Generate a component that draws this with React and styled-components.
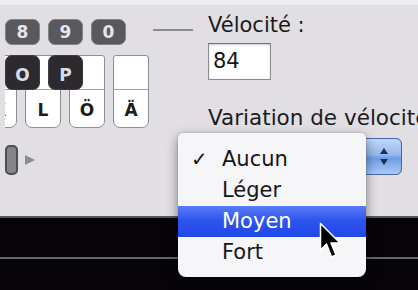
import React from "react";
import styled, { createGlobalStyle } from "styled-components";

const Global = createGlobalStyle`
  html, body { margin: 0; padding: 0; background: #e1dfe3; }
  * { box-sizing: border-box; }
`;

const Page = styled.div`
  width: 418px;
  height: 290px;
  overflow: hidden;
  position: relative;
  display: flex;
  flex-direction: column;
  background: #e1dfe3;
  font-family: "DejaVu Sans", "Noto Sans", sans-serif;
`;

const Upper = styled.div`
  height: 216px;
  flex-shrink: 0;
  display: flex;
  padding-left: 5px;
  background: linear-gradient(#eeedf0 0 5px, #e1dfe3 5px);
`;

const Keyboard = styled.div`
  width: 148px;
  flex-shrink: 0;
  display: flex;
  flex-direction: column;
  padding-top: 19px;
`;

const NumberRow = styled.div`
  display: flex;
  gap: 8px;
`;

const NumKey = styled.div`
  width: 35px;
  height: 26px;
  border-radius: 7px;
  background: #59585c;
  border: 1.5px solid #838286;
  color: #e6e5ea;
  font-weight: bold;
  font-size: 17px;
  display: flex;
  align-items: center;
  justify-content: center;
`;

const Piano = styled.div`
  margin-top: 10px;
  height: 73px;
  width: 148px;
  position: relative;
  overflow: hidden;
`;

const WhiteRow = styled.div`
  display: flex;
  gap: 8px;
  margin-left: -24px;
  height: 100%;
`;

const WhiteKey = styled.div`
  width: 36px;
  height: 73px;
  flex-shrink: 0;
  background: #ffffff;
  border: 1.5px solid #8e8d92;
  border-radius: 3px 3px 7px 7px;
  display: flex;
  flex-direction: column;
`;

const KeyTop = styled.div`
  height: 34px;
  border-bottom: 1px solid #a4a3a8;
`;

const KeyBottom = styled.div`
  flex: 1;
  display: flex;
  align-items: center;
  justify-content: center;
  padding-top: 2px;
  color: #1c1c1e;
  font-weight: bold;
  font-size: 17px;
`;

const DarkRow = styled.div`
  position: absolute;
  top: 0;
  left: 0;
  display: flex;
  gap: 8px;
`;

const DarkKey = styled.div`
  width: 35px;
  height: 35px;
  border-radius: 7px;
  background: #2c2a2e;
  border: 1px solid #3e3c41;
  color: #d6dde6;
  font-weight: bold;
  font-size: 17px;
  display: flex;
  align-items: center;
  justify-content: center;
  padding-top: 4px;
`;

const SmallRow = styled.div`
  margin-top: 17px;
  display: flex;
  align-items: center;
  gap: 7px;
`;

const SmallKey = styled.div`
  width: 13px;
  height: 30px;
  border-radius: 5px;
  background: #868589;
  border: 2px solid #4f4e52;
`;

const Arrow = styled.div`
  width: 0;
  height: 0;
  border-left: 10px solid #8b8a8e;
  border-top: 5px solid transparent;
  border-bottom: 5px solid transparent;
`;

const Connector = styled.div`
  width: 40px;
  height: 2px;
  flex-shrink: 0;
  margin-top: 29px;
  background: #8c8b8f;
`;

const Form = styled.div`
  margin-left: 15px;
  padding-top: 13px;
  display: flex;
  flex-direction: column;
  align-items: flex-start;
`;

const Label = styled.div`
  font-size: ${(p) => p.$size || 21}px;
  line-height: 24px;
  color: #1b1b1d;
  white-space: nowrap;
  margin-top: ${(p) => p.$mt || 0}px;
`;

const Field = styled.div`
  margin-top: 6px;
  width: 63px;
  height: 37px;
  background: #ffffff;
  border: 1px solid #8c8b8f;
  border-top-color: #707074;
  box-shadow: inset 0 1px 2px rgba(0, 0, 0, 0.2);
  font-size: 21px;
  line-height: 35px;
  padding-left: 4px;
  color: #151515;
`;

const Popup = styled.div`
  margin-top: 8px;
  width: 194px;
  height: 37px;
  display: flex;
  justify-content: flex-end;
  background: #ffffff;
  border: 1px solid #8d8c90;
  border-radius: 6px;
`;

const Stepper = styled.div`
  width: 37px;
  margin: -1px -1px -1px 0;
  border: 1px solid #4a69a3;
  border-radius: 0 6px 6px 0;
  background: linear-gradient(#c2d8f8, #94b8ef 45%, #6e9de6 55%, #a8c9f6);
  display: flex;
  flex-direction: column;
  align-items: center;
  justify-content: center;
  gap: 5px;
`;

const Tri = styled.div`
  width: 0;
  height: 0;
  border-left: 4.5px solid transparent;
  border-right: 4.5px solid transparent;
  ${(p) =>
    p.$up
      ? "border-bottom: 6px solid #1e2d55;"
      : "border-top: 6px solid #1e2d55;"}
`;

const Band = styled.div`
  flex: 1;
  background: #060408;
  border-top: 2px solid #58575b;
`;

const BandRule = styled.div`
  margin-top: 39px;
  height: 2px;
  background: #67666b;
`;

const Menu = styled.div`
  position: absolute;
  left: 178px;
  top: 133px;
  width: 188px;
  padding: 11px 0 9px;
  background: #f6f5f8;
  border-radius: 5px 5px 8px 8px;
  box-shadow: 0 4px 12px rgba(0, 0, 0, 0.45), 0 0 0 1px rgba(0, 0, 0, 0.06);
`;

const Item = styled.div`
  position: relative;
  height: 31px;
  line-height: 31px;
  padding-left: 44px;
  font-size: 21px;
  color: ${(p) => (p.$active ? "#ffffff" : "#161618")};
  background: ${(p) =>
    p.$active
      ? "linear-gradient(#5a7cf7, #2f55ef 45%, #1f46e9)"
      : "transparent"};
`;

const Check = styled.span`
  position: absolute;
  left: 13px;
  top: 0;
  font-size: 20px;
  font-weight: bold;
`;

const Cursor = styled.svg`
  position: absolute;
  left: 319px;
  top: 222px;
`;

export default function App() {
  const items = ["Aucun", "Léger", "Moyen", "Fort"];
  return (
    <>
      <Global />
      <Page>
        <Upper>
          <Keyboard>
            <NumberRow>
              <NumKey>8</NumKey>
              <NumKey>9</NumKey>
              <NumKey>0</NumKey>
            </NumberRow>
            <Piano>
              <WhiteRow>
                {["K", "L", "Ö", "Ä"].map((k) => (
                  <WhiteKey key={k}>
                    <KeyTop />
                    <KeyBottom>{k}</KeyBottom>
                  </WhiteKey>
                ))}
              </WhiteRow>
              <DarkRow>
                <DarkKey>O</DarkKey>
                <DarkKey>P</DarkKey>
              </DarkRow>
            </Piano>
            <SmallRow>
              <SmallKey />
              <Arrow />
            </SmallRow>
          </Keyboard>
          <Connector />
          <Form>
            <Label>Vélocité :</Label>
            <Field>84</Field>
            <Label $mt={26} $size={21.5}>
              Variation de vélocité :
            </Label>
            <Popup>
              <Stepper>
                <Tri $up />
                <Tri />
              </Stepper>
            </Popup>
          </Form>
        </Upper>
        <Band>
          <BandRule />
        </Band>
        <Menu>
          {items.map((it, i) => (
            <Item key={it} $active={it === "Moyen"}>
              {i === 0 && <Check>✓</Check>}
              {it}
            </Item>
          ))}
        </Menu>
        <Cursor width="24" height="40" viewBox="0 0 24 40">
          <path
            d="M1.5 1.5 L1.5 28 L7.5 22 L12.5 35 L17 33 L12 21 L21 21 Z"
            fill="#000"
            stroke="#fff"
            strokeWidth="1.5"
            strokeLinejoin="round"
          />
        </Cursor>
      </Page>
    </>
  );
}
